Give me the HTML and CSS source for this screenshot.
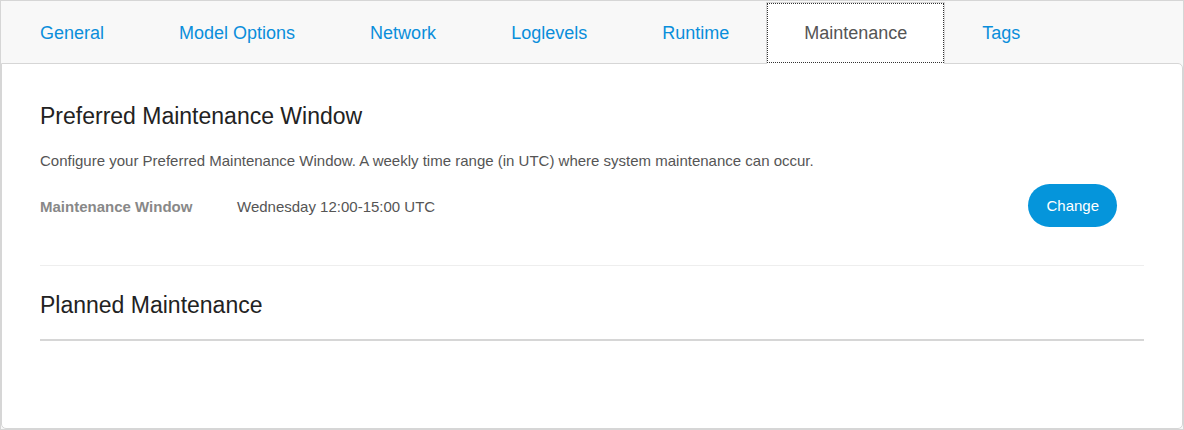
FILE: index.html
```html
<!DOCTYPE html>
<html lang="en">
<head>
<meta charset="utf-8">
<title>Maintenance</title>
<link rel="stylesheet" href="styles.css">
</head>
<body>
<div class="tabs" role="tablist">
  <button class="tab" role="tab" type="button">General</button>
  <button class="tab" role="tab" type="button">Model Options</button>
  <button class="tab" role="tab" type="button">Network</button>
  <button class="tab" role="tab" type="button">Loglevels</button>
  <button class="tab" role="tab" type="button">Runtime</button>
  <button class="tab tab-active" role="tab" type="button" aria-selected="true">Maintenance</button>
  <button class="tab" role="tab" type="button">Tags</button>
</div>
<main class="panel" role="tabpanel">
  <section class="preferred">
    <h2 class="heading">Preferred Maintenance Window</h2>
    <p class="intro">Configure your Preferred Maintenance Window. A weekly time range (in UTC) where system maintenance can occur.</p>
    <div class="row">
      <dl class="field">
        <dt class="field-name">Maintenance Window</dt>
        <dd class="field-value">Wednesday 12:00-15:00 UTC</dd>
      </dl>
      <button class="change" type="button">Change</button>
    </div>
  </section>
  <section class="planned">
    <h2 class="heading">Planned Maintenance</h2>
  </section>
</main>
</body>
</html>
```
FILE: styles.css
```css
* {
  box-sizing: border-box;
}

body {
  margin: 0;
  min-height: 100vh;
  display: flex;
  flex-direction: column;
  border: 1px solid #d6d6d6;
  background: #f8f8f8;
  color: #555;
  font: 15px/20px "Liberation Sans", Arial, sans-serif;
}

.tabs {
  display: flex;
  gap: 1px;
  height: 62px;
  padding-left: 2px;
}

.tab {
  padding: 2px 36px 0;
  border: 1px solid transparent;
  background: none;
  color: #0a8edb;
  font: inherit;
  font-size: 18px;
}

/* The white shadow covers the panel's top border so that the tab opens into it. */
.tab-active {
  z-index: 1;
  margin-top: 2px;
  padding-top: 0;
  border: 1px dotted #333;
  box-shadow: 0 1px 0 #fff, 0 0 0 1px #d6d6d6;
  background: #fff;
  color: #555;
}

.panel {
  flex: 1;
  padding: 38px;
  border: 1px solid #d6d6d6;
  border-radius: 0 5px 5px 5px;
  background: #fff;
}

.preferred {
  padding-bottom: 38px;
  border-bottom: 1px solid #eee;
}

.heading {
  margin: 0;
  color: #222;
  font-size: 23px;
  font-weight: 400;
  line-height: 28px;
}

.intro {
  margin: 21px 0 13px;
}

.row {
  display: flex;
  justify-content: space-between;
  align-items: center;
  padding-right: 27px;
}

.field {
  display: flex;
  margin: 0;
  padding-top: 2px;
}

.field-name {
  width: 197px;
  color: #888;
  font-weight: 700;
}

.field-value {
  margin: 0;
}

.change {
  height: 43px;
  padding: 0 18px;
  border: 0;
  border-radius: 22px;
  background: #0595db;
  color: #fff;
  font: inherit;
}

.planned {
  padding: 25px 0 20px;
  border-bottom: 2px solid #d6d6d6;
}
```
